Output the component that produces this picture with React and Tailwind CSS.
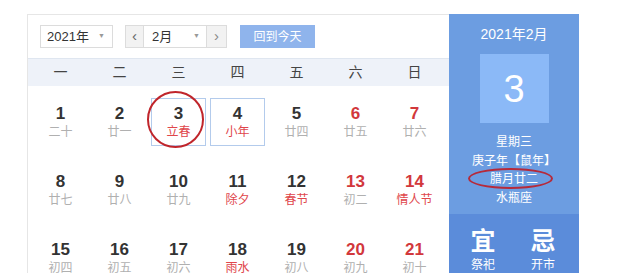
import React from "react";

const F = { fontFamily: '"Liberation Sans", "Noto Sans CJK SC", sans-serif' };

const rows = [
  [
    ["1", "二十", 0, 0],
    ["2", "廿一", 0, 0],
    ["3", "立春", 0, 1],
    ["4", "小年", 0, 1],
    ["5", "廿四", 0, 0],
    ["6", "廿五", 1, 0],
    ["7", "廿六", 1, 0],
  ],
  [
    ["8", "廿七", 0, 0],
    ["9", "廿八", 0, 0],
    ["10", "廿九", 0, 0],
    ["11", "除夕", 0, 1],
    ["12", "春节", 0, 1],
    ["13", "初二", 1, 0],
    ["14", "情人节", 1, 1],
  ],
  [
    ["15", "初四", 0, 0],
    ["16", "初五", 0, 0],
    ["17", "初六", 0, 0],
    ["18", "雨水", 0, 1],
    ["19", "初八", 0, 0],
    ["20", "初九", 1, 0],
    ["21", "初十", 1, 0],
  ],
];

const heads = ["一", "二", "三", "四", "五", "六", "日"];

function Cell({ d, l, we, fest, boxed, circled }) {
  return (
    <div className="relative w-[59px] h-[68px] flex justify-center pt-[12px]">
      <div
        className={
          "w-[55px] h-[48px] flex flex-col items-center pt-[5px] border " +
          (boxed ? "border-[#b3cbec]" : "border-transparent")
        }
      >
        <div
          className={
            "text-[17px] leading-[20px] font-bold " +
            (we ? "text-[#d2383c]" : "text-[#333333]")
          }
        >
          {d}
        </div>
        <div
          className={
            "text-[12px] leading-[16px] " +
            (fest ? "text-[#e0464b]" : "text-[#b0b0b0]")
          }
        >
          {l}
        </div>
      </div>
      {circled && (
        <div className="absolute left-[-2px] top-[5px] w-[57px] h-[57px] rounded-full border-[2.5px] border-[#c0252b]" />
      )}
    </div>
  );
}

export default function App() {
  return (
    <div className="w-[640px] h-[273px] bg-white overflow-hidden pl-[27px] pt-[14px]" style={F}>
      <div className="flex h-[259px]">
        {/* left calendar */}
        <div className="w-[422px] border-l border-t border-[#e6e6e6] bg-white">
          <div className="h-[43px] flex items-start pt-[10px] pl-[12px]">
            <div className="w-[73px] h-[23px] border border-[#dcdcdc] bg-white flex items-center pl-[6px] pr-[7px] justify-between">
              <span className="text-[13px] text-[#333]">2021年</span>
              <span className="text-[7px] text-[#999]">▼</span>
            </div>
            <div className="ml-[12px] flex h-[23px] border border-[#dcdcdc]">
              <div className="w-[18px] bg-[#f2f2f2] flex items-center justify-center text-[15px] text-[#666] border-r border-[#dcdcdc]">
                ‹
              </div>
              <div className="w-[62px] bg-white flex items-center justify-between pl-[8px] pr-[6px]">
                <span className="text-[13px] text-[#333]">2月</span>
                <span className="text-[7px] text-[#999]">▼</span>
              </div>
              <div className="w-[20px] bg-[#f2f2f2] flex items-center justify-center text-[15px] text-[#888] border-l border-[#dcdcdc]">
                ›
              </div>
            </div>
            <div className="ml-[13px] w-[75px] h-[23px] bg-[#8fb4ec] text-white text-[12px] flex items-center justify-center">
              回到今天
            </div>
          </div>
          <div className="h-[28px] bg-[#eef2f9] border-t border-[#dfe6f0] flex pl-[3px] items-center">
            {heads.map((h) => (
              <div key={h} className="w-[59px] text-center text-[14px] text-[#444]">
                {h}
              </div>
            ))}
          </div>
          {rows.map((r, ri) => (
            <div key={ri} className="flex pl-[3px]">
              {r.map(([d, l, we, fest]) => (
                <Cell
                  key={d}
                  d={d}
                  l={l}
                  we={we}
                  fest={fest}
                  boxed={d === "3" || d === "4"}
                  circled={d === "3"}
                />
              ))}
            </div>
          ))}
        </div>
        {/* right panel */}
        <div className="w-[130px] flex flex-col bg-[#6c9de1] text-white">
          <div className="h-[201px] flex flex-col items-center">
            <div className="mt-[11px] text-[14px] leading-[18px]">2021年2月</div>
            <div className="mt-[11px] w-[69px] h-[69px] bg-[#8bb9f7] flex items-center justify-center text-[38px] leading-none font-medium">
              3
            </div>
            <div className="mt-[10px] flex flex-col items-center text-[12px] leading-[18.5px]">
              <div>星期三</div>
              <div>庚子年【鼠年】</div>
              <div className="relative">
                腊月廿二
                <div className="absolute left-[-22px] top-[-2px] w-[85px] h-[21px] rounded-[50%] border-[2.5px] border-[#b62a3a]" />
              </div>
              <div>水瓶座</div>
            </div>
          </div>
          <div className="flex-1 bg-[#5b8cda] flex pl-[4px] pt-[13px]">
            <div className="w-[60px] flex flex-col items-center">
              <div className="text-[25px] leading-[28px] font-bold">宜</div>
              <div className="text-[12px] leading-[16px] mt-[2px]">祭祀</div>
            </div>
            <div className="w-[60px] flex flex-col items-center">
              <div className="text-[25px] leading-[28px] font-bold">忌</div>
              <div className="text-[12px] leading-[16px] mt-[2px]">开市</div>
            </div>
          </div>
        </div>
      </div>
    </div>
  );
}
